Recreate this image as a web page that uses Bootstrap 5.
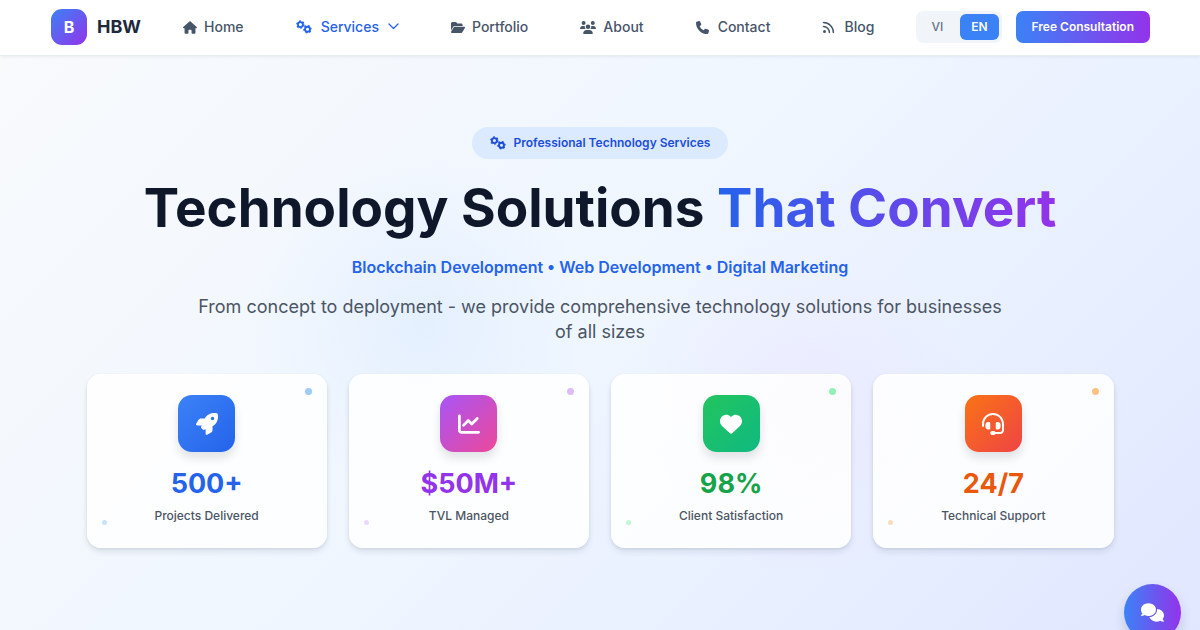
<!DOCTYPE html>
<html lang="en">
<head>
<meta charset="utf-8">
<meta name="viewport" content="width=device-width, initial-scale=1">
<title>HBW - Technology Solutions</title>
<link href="https://cdn.jsdelivr.net/npm/bootstrap@5.3.0/dist/css/bootstrap.min.css" rel="stylesheet">
<style>
  body { font-family: Inter, "Liberation Sans", sans-serif; color: #475569; background: #eff6ff; }
  svg { display: block; flex: none; fill: currentColor; }
  a { text-decoration: none; }

  .site-bar { height: 56px; background: #fff; border-bottom: 1px solid #e8edf3; box-shadow: 0 1px 3px rgba(15, 23, 42, .06); z-index: 5; padding: 0 50px 2px 51px; }
  .brand-tile { width: 36px; height: 36px; border-radius: 11px; background: linear-gradient(135deg, #3b82f6, #9333ea); color: #fff; font-size: 16px; font-weight: 700; }
  .brand-link { gap: 10px; }
  .brand-name { font-size: 18px; font-weight: 700; color: #1e293b; }
  .site-links { font-size: 14px; line-height: 20px; font-weight: 500; margin: 0 42px; }
  .site-links a { color: #475569; gap: 7px; }
  .site-links a.roomy { gap: 9px; }
  .site-links a.current { color: #2563eb; }
  .site-links .link-icon { margin-top: 2px; }

  .lang-switch { background: #f1f5f9; border-radius: 7px; padding: 3px; height: 32px; gap: 5px; }
  .lang-switch button { border: 0; background: none; border-radius: 6px; font-size: 12px; line-height: 20px; font-weight: 500; color: #64748b; padding: 3px 12px; }
  .lang-switch button.chosen { background: #3b82f6; color: #fff; font-weight: 600; padding: 3px 11px; }
  .consult { border: 0; height: 32px; border-radius: 7px; font-size: 12px; font-weight: 600; color: #fff; background: linear-gradient(90deg, #3b82f6, #9333ea); padding: 0 16px; margin-left: 14px; }

  .hero { min-height: calc(100vh - 56px); padding: 71px 0 64px;
    background:
      radial-gradient(circle at 35% 270px, rgba(191, 219, 254, .25), rgba(191, 219, 254, 0) 170px),
      radial-gradient(circle at 67% 350px, rgba(233, 213, 255, .25), rgba(233, 213, 255, 0) 170px),
      linear-gradient(135deg, #f8fafc 0%, #eff6ff 50%, #e0e7ff 100%); }
  .hero-inner { max-width: 1027px; }
  .pill { height: 32px; border-radius: 16px; background: #dbeafe; color: #1d4ed8; font-size: 12px; font-weight: 600; padding: 0 18px; }
  .headline { font-size: 53px; line-height: 68px; font-weight: 700; color: #0f172a; margin: 15px 0 13px; }
  .headline span { background: linear-gradient(90deg, #2563eb, #9333ea); -webkit-background-clip: text; background-clip: text; color: transparent; }
  .topics { font-size: 16px; line-height: 24px; font-weight: 600; color: #2563eb; margin-bottom: 15px; }
  .intro { max-width: 820px; font-size: 18px; line-height: 25px; color: #4b5563; margin-bottom: 30px; }

  .stats { display: grid; grid-template-columns: repeat(4, 1fr); gap: 22px; }
  .stat { height: 174px; border-radius: 14px; padding: 20px; background: rgba(255, 255, 255, .85); border: 1px solid rgba(255, 255, 255, .6); box-shadow: 0 4px 6px rgba(15, 23, 42, .09), 0 1px 3px rgba(15, 23, 42, .08); }
  .stat::before, .stat::after { content: ""; position: absolute; border-radius: 50%; background: var(--dot); }
  .stat::before { width: 7px; height: 7px; top: 13px; right: 14px; opacity: .9; }
  .stat::after { width: 5px; height: 5px; bottom: 22px; left: 14px; opacity: .5; }
  .stat-tile { width: 57px; height: 57px; border-radius: 14px; color: #fff; background: linear-gradient(135deg, var(--from), var(--to)); box-shadow: 0 6px 10px rgba(15, 23, 42, .12); }
  .stat-figure { font-size: 27px; line-height: 32px; font-weight: 700; color: var(--ink); margin-top: 16px; }
  .stat-label { font-size: 12px; line-height: 18px; font-weight: 500; color: #4b5563; margin-top: 7px; }
  .tone-blue { --dot: #93c5fd; --from: #3b82f6; --to: #2563eb; --ink: #2563eb; }
  .tone-purple { --dot: #d8b4fe; --from: #a855f7; --to: #ec4899; --ink: #9333ea; }
  .tone-green { --dot: #86efac; --from: #22c55e; --to: #10b981; --ink: #16a34a; }
  .tone-orange { --dot: #fdba74; --from: #f97316; --to: #ef4444; --ink: #ea580c; }

  .chat { right: 19px; bottom: -11px; width: 57px; height: 57px; border: 0; border-radius: 50%; color: #fff; background: linear-gradient(90deg, #3b82f6, #9333ea); box-shadow: 0 6px 12px rgba(15, 23, 42, .15); }
</style>
</head>
<body>
<svg width="0" height="0" class="position-absolute" aria-hidden="true">
  <symbol id="gears" viewBox="0 0 16 14">
    <g fill="none" stroke="currentColor">
      <circle cx="4.4" cy="4.6" r="2.5" stroke-width="1.9"/>
      <circle cx="4.4" cy="4.6" r="3.6" stroke-width="1.3" stroke-dasharray="1.9 1.87"/>
      <circle cx="11.5" cy="9.2" r="2.5" stroke-width="1.9"/>
      <circle cx="11.5" cy="9.2" r="3.6" stroke-width="1.3" stroke-dasharray="1.9 1.87" stroke-dashoffset="1.9"/>
    </g>
  </symbol>
</svg>

<header class="site-bar d-flex align-items-center position-relative">
  <a href="#" class="brand-link d-flex align-items-center">
    <span class="brand-tile d-flex align-items-center justify-content-center">B</span>
    <span class="brand-name">HBW</span>
  </a>
  <nav class="site-links d-flex justify-content-between flex-grow-1" aria-label="Main">
    <a href="#" class="d-flex align-items-center">
      <svg class="link-icon" width="14" height="13" viewBox="0 0 576 512"><path d="M575.8 255.5c0 18-15 32.1-32 32.1h-32l.7 160.2c0 2.7-.2 5.4-.5 8.1V472c0 22.1-17.9 40-40 40H392c-22.1 0-40-17.9-40-40V384c0-17.7-14.3-32-32-32H256c-17.7 0-32 14.3-32 32v88c0 22.1-17.9 40-40 40H104c-22.1 0-40-17.9-40-40V287.6H32c-18 0-32-14-32-32.1c0-9 3-17 10-24L266.4 8c7-7 15-8 22-8s15 2 21 7L564.8 231.5c8 7 12 15 11 24z"/></svg>
      Home</a>
    <a href="#" class="current roomy d-flex align-items-center">
      <svg width="16" height="14"><use href="#gears"/></svg>
      Services
      <svg width="11" height="7" viewBox="0 0 11 7"><path d="M1 1l4.500 4.500L10 1" fill="none" stroke="currentColor" stroke-width="1.300" stroke-linecap="round" stroke-linejoin="round"/></svg></a>
    <a href="#" class="d-flex align-items-center">
      <svg class="link-icon" width="14" height="13" viewBox="0 0 576 512"><path d="M88.700 223.800L0 375.800V96C0 60.700 28.700 32 64 32H181.500c17 0 33.300 6.700 45.300 18.700l26.500 26.500c12 12 28.300 18.700 45.300 18.700H416c35.300 0 64 28.700 64 64v32H144c-22.800 0-43.800 12.100-55.300 31.800zm27.600 16.100C122.100 230 132.600 224 144 224H544c11.500 0 22 6.100 27.700 16.100s5.700 22.200-.1 32.100l-112 192C453.900 474 443.400 480 432 480H32c-11.500 0-22-6.100-27.700-16.100s-5.700-22.200 .1-32.100l112-192z"/></svg>
      Portfolio</a>
    <a href="#" class="d-flex align-items-center">
      <svg class="link-icon" width="16" height="13" viewBox="0 0 640 512"><circle cx="144" cy="80" r="80"/><circle cx="512" cy="80" r="80"/><circle cx="320" cy="224" r="92"/><path d="M0 298.700C0 239.800 47.800 192 106.700 192h42.700c15.900 0 31 3.500 44.600 9.700-9 70 20 105 46 118.300H21.300C9.600 320 0 310.400 0 298.700zM405.300 320c36-32 49-65 40.700-118.300 13.600-6.300 28.700-9.700 44.600-9.700h42.700C592.200 192 640 239.800 640 298.700c0 11.800-9.600 21.300-21.300 21.300zM128 485.300C128 411.700 187.700 352 261.300 352h117.300C452.300 352 512 411.700 512 485.300c0 14.700-11.900 26.700-26.700 26.700H154.700c-14.700 0-26.700-11.900-26.700-26.700z"/></svg>
      About</a>
    <a href="#" class="roomy d-flex align-items-center">
      <svg class="link-icon" width="13" height="13" viewBox="0 0 512 512"><path d="M164.900 24.600c-7.700-18.600-28-28.500-47.400-23.200l-88 24C12.100 30.200 0 46 0 64C0 311.400 200.600 512 448 512c18 0 33.800-12.100 38.600-29.500l24-88c5.300-19.400-4.600-39.700-23.200-47.400l-96-40c-16.300-6.800-35.200-2.100-46.300 11.600L304.700 368C234.300 334.700 177.300 277.700 144 207.300L193.300 167c13.700-11.200 18.400-30 11.600-46.300l-40-96z"/></svg>
      Contact</a>
    <a href="#" class="roomy d-flex align-items-center">
      <svg class="link-icon" width="13" height="13" viewBox="0 0 13 13"><circle cx="2.500" cy="10.500" r="1.500"/><path d="M1.500 5.600a5.900 5.900 0 0 1 5.900 5.900M1.500 1.600a9.900 9.900 0 0 1 9.900 9.900" fill="none" stroke="currentColor" stroke-width="1.500" stroke-linecap="round"/></svg>
      Blog</a>
  </nav>
  <div class="lang-switch d-flex align-items-center" role="group" aria-label="Language">
    <button type="button">VI</button>
    <button type="button" class="chosen">EN</button>
  </div>
  <button type="button" class="consult">Free Consultation</button>
</header>

<main class="hero">
  <div class="hero-inner mx-auto text-center">
    <div class="pill d-inline-flex align-items-center gap-2">
      <svg width="16" height="14"><use href="#gears"/></svg>
      Professional Technology Services
    </div>
    <h1 class="headline">Technology Solutions <span>That Convert</span></h1>
    <p class="topics">Blockchain Development • Web Development • Digital Marketing</p>
    <p class="intro mx-auto">From concept to deployment - we provide comprehensive technology solutions for businesses of all sizes</p>
    <div class="stats">
      <div class="stat tone-blue position-relative d-flex flex-column align-items-center">
        <div class="stat-tile d-flex align-items-center justify-content-center"><svg width="22" height="22" viewBox="0 0 512 512"><path fill-rule="evenodd" d="M156.600 384.900L125.700 354c-8.500-8.500-11.500-20.800-7.700-32.200c3-8.900 7-20.500 11.800-33.800L24 288c-8.600 0-16.600-4.600-20.900-12.100s-4.200-16.700 .2-24.100l52.500-88.500c13-21.900 36.500-35.300 61.900-35.300l82.300 0c2.400-4 4.800-7.700 7.200-11.300C289.100-4.100 411.100-8.100 483.900 5.300c11.600 2.100 20.600 11.200 22.800 22.800c13.400 72.900 9.300 194.800-111.400 276.700c-3.500 2.400-7.300 4.800-11.300 7.200v82.300c0 25.400-13.400 49-35.300 61.900l-88.500 52.500c-7.400 4.400-16.600 4.500-24.100 .2s-12.100-12.200-12.100-20.900V380.800c-14.100 4.900-26.400 8.900-35.700 11.900c-11.200 3.600-23.400 .5-31.800-7.800zM384 168a40 40 0 1 0 0-80 40 40 0 1 0 0 80z"/></svg></div>
        <div class="stat-figure">500+</div>
        <div class="stat-label">Projects Delivered</div>
      </div>
      <div class="stat tone-purple position-relative d-flex flex-column align-items-center">
        <div class="stat-tile d-flex align-items-center justify-content-center"><svg width="22" height="22" viewBox="0 0 512 512"><path d="M64 64c0-17.700-14.300-32-32-32S0 46.300 0 64V400c0 44.200 35.800 80 80 80H480c17.700 0 32-14.300 32-32s-14.300-32-32-32H80c-8.800 0-16-7.200-16-16V64zm406.600 86.600c12.500-12.500 12.500-32.800 0-45.300s-32.800-12.500-45.300 0L320 210.700l-57.400-57.400c-12.500-12.500-32.800-12.500-45.300 0l-112 112c-12.500 12.500-12.500 32.800 0 45.300s32.800 12.500 45.300 0L240 221.300l57.400 57.400c12.500 12.500 32.800 12.500 45.300 0l128-128z"/></svg></div>
        <div class="stat-figure">$50M+</div>
        <div class="stat-label">TVL Managed</div>
      </div>
      <div class="stat tone-green position-relative d-flex flex-column align-items-center">
        <div class="stat-tile d-flex align-items-center justify-content-center"><svg width="22" height="22" viewBox="0 0 512 512"><path d="M47.600 300.400L228.300 469.100c7.500 7 17.400 10.900 27.700 10.900s20.200-3.900 27.700-10.900L464.400 300.400c30.400-28.300 47.600-68 47.600-109.500v-5.800c0-69.900-50.500-129.500-119.400-141C347 36.500 300.600 51.400 268 84L256 96 244 84c-32.600-32.600-79-47.500-124.600-39.900C50.500 55.600 0 115.200 0 185.100v5.800c0 41.500 17.200 81.200 47.600 109.500z"/></svg></div>
        <div class="stat-figure">98%</div>
        <div class="stat-label">Client Satisfaction</div>
      </div>
      <div class="stat tone-orange position-relative d-flex flex-column align-items-center">
        <div class="stat-tile d-flex align-items-center justify-content-center"><svg width="22" height="22" viewBox="0 0 512 512"><path d="M256 48C141.100 48 48 141.100 48 256v40c0 13.300-10.700 24-24 24s-24-10.700-24-24V256C0 114.600 114.600 0 256 0S512 114.600 512 256V400.100c0 48.600-39.400 88-88.100 88L313.600 488c-8.300 14.300-23.800 24-41.600 24H240c-26.500 0-48-21.500-48-48s21.500-48 48-48h32c17.800 0 33.300 9.700 41.600 24l110.400 .1c22.100 0 40-17.900 40-40V256c0-114.900-93.100-208-208-208zM144 208h16c17.700 0 32 14.300 32 32V352c0 17.700-14.300 32-32 32H144c-35.300 0-64-28.700-64-64V272c0-35.300 28.700-64 64-64zm224 0c35.300 0 64 28.700 64 64v48c0 35.300-28.700 64-64 64H352c-17.700 0-32-14.300-32-32V240c0-17.700 14.300-32 32-32h16z"/></svg></div>
        <div class="stat-figure">24/7</div>
        <div class="stat-label">Technical Support</div>
      </div>
    </div>
  </div>
</main>

<button type="button" class="chat position-fixed d-flex align-items-center justify-content-center" aria-label="Open chat">
  <svg width="23" height="19" viewBox="0 0 640 512"><path d="M208 352c114.900 0 208-78.800 208-176S322.900 0 208 0S0 78.800 0 176c0 38.600 14.700 74.300 39.600 103.400c-3.500 9.400-8.700 17.700-14.200 24.700c-4.800 6.200-9.700 11-13.300 14.300l-5.600 4.700C1 327.200-1.400 334.400 .8 340.900S9.100 352 16 352c21.800 0 43.800-5.600 62.100-12.500c9.200-3.500 17.800-7.400 25.300-11.400C134.100 343.300 169.800 352 208 352zM448 176c0 112.300-99.100 196.900-216.500 207C255.800 457.400 336.400 512 432 512c38.200 0 73.900-8.700 104.700-23.900c7.500 4 16 7.900 25.200 11.400c18.300 6.900 40.300 12.500 62.100 12.500c6.900 0 13.100-4.500 15.200-11.100c2.100-6.600-.2-13.800-5.800-17.900l-5.600-4.700c-3.600-3.300-8.500-8.100-13.300-14.300c-5.500-7-10.700-15.400-14.200-24.700c24.900-29 39.600-64.700 39.600-103.400c0-92.800-84.900-168.900-192.600-175.500c.4 5.100 .6 10.300 .6 15.500z"/></svg>
</button>
<script src="https://cdn.jsdelivr.net/npm/bootstrap@5.3.0/dist/js/bootstrap.bundle.min.js"></script>
</body>
</html>
